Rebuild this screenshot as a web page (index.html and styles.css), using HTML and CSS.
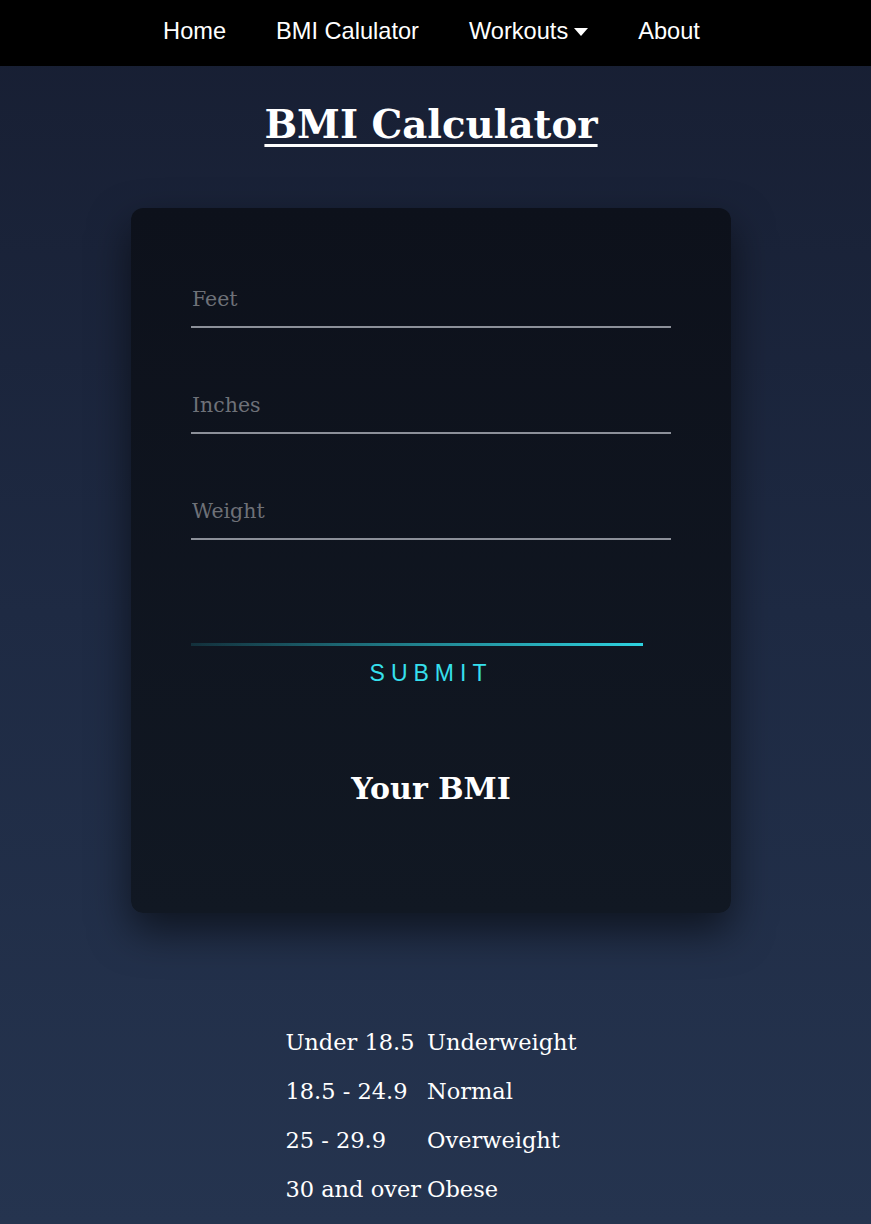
FILE: index.html
```html
<!DOCTYPE html>
<html lang="en">
<head>
<meta charset="utf-8">
<title>BMI Calculator</title>
<link rel="stylesheet" href="styles.css">
</head>
<body>
<nav class="nav">
  <a class="nav-link" href="#">Home</a>
  <a class="nav-link" href="#">BMI Calulator</a>
  <a class="nav-link" href="#">Workouts <span class="caret"></span></a>
  <a class="nav-link" href="#">About</a>
</nav>
<main class="main">
  <h1 class="title">BMI Calculator</h1>
  <section class="card">
    <div class="field"><input class="input" type="text" placeholder="Feet"></div>
    <div class="field"><input class="input" type="text" placeholder="Inches"></div>
    <div class="field"><input class="input" type="text" placeholder="Weight"></div>
    <div class="submit-wrap">
      <div class="submit-line"></div>
      <button class="submit" type="button">SUBMIT</button>
    </div>
    <h2 class="result">Your BMI</h2>
  </section>
  <table class="ranges">
    <tr><td>Under 18.5</td><td>Underweight</td></tr>
    <tr><td>18.5 - 24.9</td><td>Normal</td></tr>
    <tr><td>25 - 29.9</td><td>Overweight</td></tr>
    <tr><td>30 and over</td><td>Obese</td></tr>
  </table>
</main>
</body>
</html>
```

FILE: styles.css
```css
* { box-sizing: border-box; }
html, body { margin: 0; padding: 0; }
body {
  min-height: 1224px;
  background: linear-gradient(180deg, #171e32 0%, #1e2a43 50%, #25344f 100%);
  font-family: "DejaVu Serif", "Liberation Serif", serif;
  color: #fff;
}
.nav {
  height: 66px;
  background: #000;
  display: flex;
  justify-content: center;
  align-items: center;
  gap: 50px;
  padding: 0 8px 4px 0;
}
.nav-link {
  font-family: "Liberation Sans", Arial, sans-serif;
  font-size: 23.6px;
  color: #fff;
  text-decoration: none;
  display: flex;
  align-items: center;
  gap: 6px;
}
.caret {
  width: 0; height: 0;
  border-left: 7px solid transparent;
  border-right: 7px solid transparent;
  border-top: 8px solid #fff;
  margin-top: 2px;
}
.main {
  display: flex;
  flex-direction: column;
  align-items: center;
  padding-right: 9px;
}
.title {
  margin: 30px 0 0;
  font-size: 38.7px;
  line-height: 58px;
  font-weight: bold;
  text-decoration: underline;
  text-decoration-thickness: 3px;
  text-underline-offset: 6px;
}
.card {
  margin-top: 54px;
  width: 600px;
  height: 705px;
  border-radius: 12px;
  background: linear-gradient(180deg, #0d111b 0%, #111823 100%);
  box-shadow: 0 18px 40px rgba(0, 0, 0, 0.55);
  padding: 70px 60px 0;
  display: flex;
  flex-direction: column;
}
.field { margin-bottom: 56px; }
.input {
  width: 480px;
  height: 50px;
  background: transparent;
  border: none;
  border-bottom: 2px solid #8c9099;
  outline: none;
  padding: 0 1px 6px;
  font-family: "DejaVu Serif", serif;
  font-size: 20.5px;
  color: #fff;
}
.input::placeholder { color: #6e7178; }
.submit-wrap {
  margin-top: 47px;
  display: flex;
  flex-direction: column;
  align-items: center;
}
.submit-line {
  align-self: flex-start;
  width: 452px;
  height: 3px;
  background: linear-gradient(90deg, rgba(40, 200, 215, 0.15), #2ed3e0);
}
.submit {
  margin-top: 13px;
  background: none;
  border: none;
  padding: 0;
  font-family: "Liberation Sans", Arial, sans-serif;
  font-size: 23px;
  letter-spacing: 6px;
  color: #36e0ee;
  line-height: 28px;
}
.result {
  margin: 82px 0 0;
  text-align: center;
  font-size: 30px;
  font-weight: bold;
  line-height: 40px;
}
.ranges {
  margin-top: 104px;
  border-collapse: collapse;
  font-size: 22.5px;
}
.ranges td {
  padding: 0 6px 0 0;
  height: 49px;
  white-space: nowrap;
}
.ranges td:last-child { padding-right: 0; }
```
